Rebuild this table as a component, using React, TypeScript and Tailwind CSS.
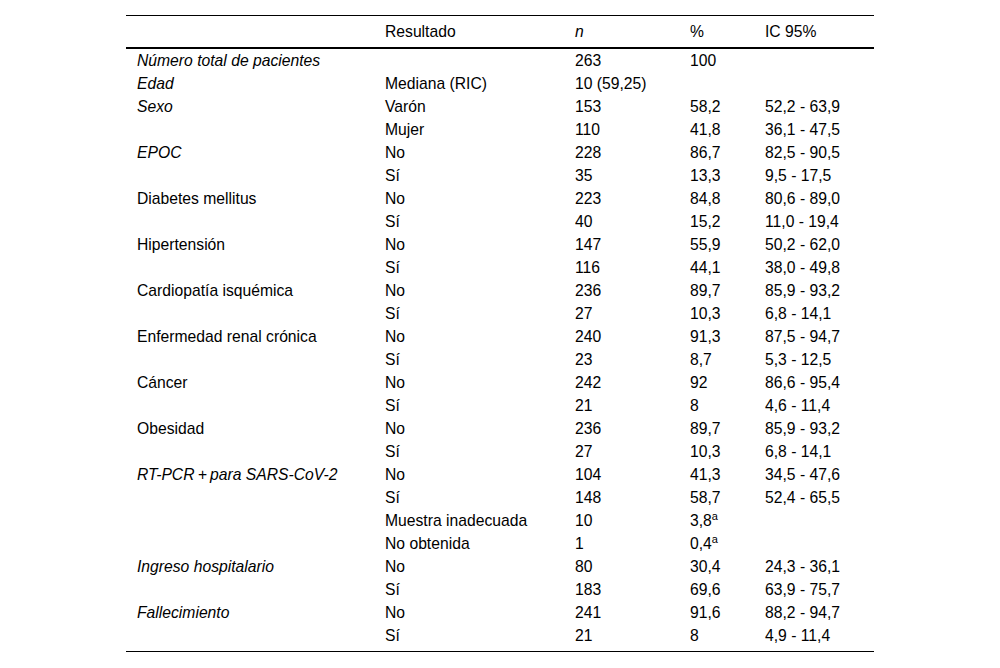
import React from "react";

type Row = { a?: string; italic?: boolean; b: string; n: string; p: string; sup?: boolean; ic: string };

const rows: Row[] = [
  { a: "Número total de pacientes", italic: true, b: "", n: "263", p: "100", ic: "" },
  { a: "Edad", italic: true, b: "Mediana (RIC)", n: "10 (59,25)", p: "", ic: "" },
  { a: "Sexo", italic: true, b: "Varón", n: "153", p: "58,2", ic: "52,2 - 63,9" },
  { b: "Mujer", n: "110", p: "41,8", ic: "36,1 - 47,5" },
  { a: "EPOC", italic: true, b: "No", n: "228", p: "86,7", ic: "82,5 - 90,5" },
  { b: "Sí", n: "35", p: "13,3", ic: "9,5 - 17,5" },
  { a: "Diabetes mellitus", b: "No", n: "223", p: "84,8", ic: "80,6 - 89,0" },
  { b: "Sí", n: "40", p: "15,2", ic: "11,0 - 19,4" },
  { a: "Hipertensión", b: "No", n: "147", p: "55,9", ic: "50,2 - 62,0" },
  { b: "Sí", n: "116", p: "44,1", ic: "38,0 - 49,8" },
  { a: "Cardiopatía isquémica", b: "No", n: "236", p: "89,7", ic: "85,9 - 93,2" },
  { b: "Sí", n: "27", p: "10,3", ic: "6,8 - 14,1" },
  { a: "Enfermedad renal crónica", b: "No", n: "240", p: "91,3", ic: "87,5 - 94,7" },
  { b: "Sí", n: "23", p: "8,7", ic: "5,3 - 12,5" },
  { a: "Cáncer", b: "No", n: "242", p: "92", ic: "86,6 - 95,4" },
  { b: "Sí", n: "21", p: "8", ic: "4,6 - 11,4" },
  { a: "Obesidad", b: "No", n: "236", p: "89,7", ic: "85,9 - 93,2" },
  { b: "Sí", n: "27", p: "10,3", ic: "6,8 - 14,1" },
  { a: "RT-PCR\u2009+\u2009para SARS-CoV-2", italic: true, b: "No", n: "104", p: "41,3", ic: "34,5 - 47,6" },
  { b: "Sí", n: "148", p: "58,7", ic: "52,4 - 65,5" },
  { b: "Muestra inadecuada", n: "10", p: "3,8", sup: true, ic: "" },
  { b: "No obtenida", n: "1", p: "0,4", sup: true, ic: "" },
  { a: "Ingreso hospitalario", italic: true, b: "No", n: "80", p: "30,4", ic: "24,3 - 36,1" },
  { b: "Sí", n: "183", p: "69,6", ic: "63,9 - 75,7" },
  { a: "Fallecimiento", italic: true, b: "No", n: "241", p: "91,6", ic: "88,2 - 94,7" },
  { b: "Sí", n: "21", p: "8", ic: "4,9 - 11,4" },
];

const grid = "grid grid-cols-[248px_190px_115px_75px_120px]";

export default function App() {
  return (
    <div
      className="w-[1000px] h-[668px] bg-white text-black pt-[15px]"
      style={{ fontFamily: '"Liberation Sans", Arial, sans-serif' }}
    >
      <div className="w-[748px] mx-auto border-t border-black border-b border-b-black pb-[4px] text-[15.7px] leading-[23px]">
        <div className={`${grid} h-[33px] items-center border-b-2 border-black`}>
          <div className="pl-[11px]"></div>
          <div className="pl-[11px]">Resultado</div>
          <div className="pl-[11px] italic">n</div>
          <div className="pl-[11px]">%</div>
          <div className="pl-[11px]">IC 95%</div>
        </div>
        {rows.map((r, i) => (
          <div key={i} className={`${grid} h-[23px] items-center`}>
            <div className={`pl-[11px] whitespace-nowrap ${r.italic ? "italic" : ""}`}>{r.a ?? ""}</div>
            <div className="pl-[11px] whitespace-nowrap">{r.b}</div>
            <div className="pl-[11px] whitespace-nowrap">{r.n}</div>
            <div className="pl-[11px] whitespace-nowrap">
              {r.p}
              {r.sup && <sup className="text-[11px] top-[-0.55em]">a</sup>}
            </div>
            <div className="pl-[11px] whitespace-nowrap">{r.ic}</div>
          </div>
        ))}
      </div>
    </div>
  );
}
